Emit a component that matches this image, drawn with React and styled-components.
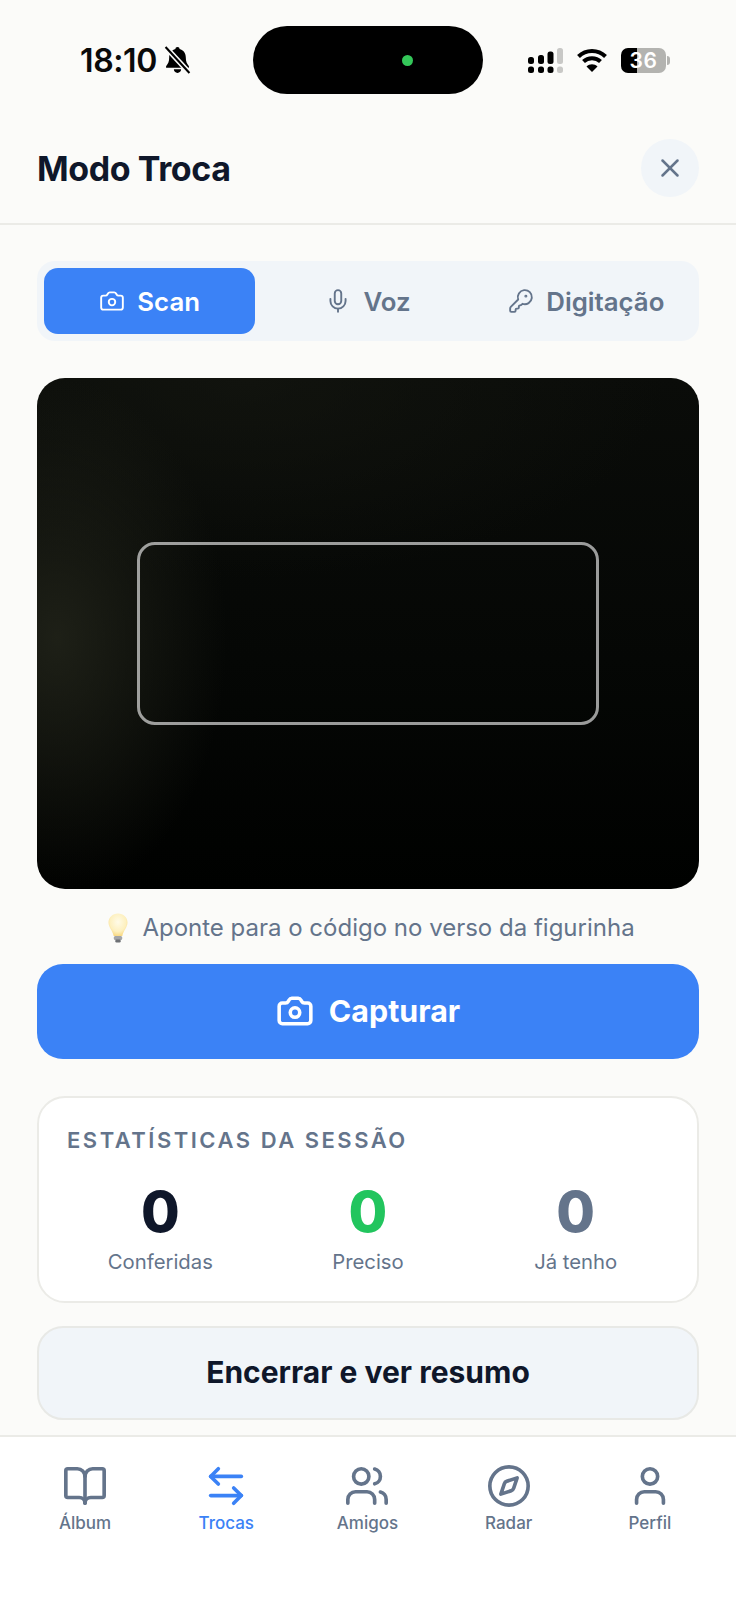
import React from 'react';
import styled, { createGlobalStyle } from 'styled-components';
import { ArrowLeftRight, BookOpen, Camera, Compass, KeyRound, Mic, User, Users, X } from 'lucide-react';

const GlobalStyle = createGlobalStyle`
  html, body {
    margin: 0;
    padding: 0;
    background: #fbfbf9;
  }
  * {
    box-sizing: border-box;
  }
  body {
    font-family: Inter, "Noto Sans", sans-serif;
  }
`;

const Page = styled.div`
  width: 736px;
  height: 1600px;
  display: flex;
  flex-direction: column;
  overflow: hidden;
  background: #fbfbf9;
`;

const StatusBar = styled.div`
  height: 120px;
  padding-top: 26px;
  display: grid;
  grid-template-columns: 253px 230px 1fr;
  align-items: start;
`;

const StatusLeft = styled.div`
  height: 68px;
  padding-left: 80px;
  display: flex;
  align-items: center;
  gap: 7px;
`;

const Time = styled.span`
  font-size: 32px;
  font-weight: 600;
  letter-spacing: -0.4px;
  color: #0a0a0a;
`;

const Island = styled.div`
  height: 68px;
  border-radius: 34px;
  background: #000;
  display: flex;
  align-items: center;
  padding-left: 149px;
`;

const GreenDot = styled.span`
  width: 11px;
  height: 11px;
  border-radius: 50%;
  background: #34c759;
`;

const StatusRight = styled.div`
  height: 68px;
  padding-left: 45px;
  display: flex;
  align-items: center;
  gap: 14px;
`;

const Battery = styled.div`
  position: relative;
  width: 45px;
  height: 25px;
  border-radius: 7px;
  background: linear-gradient(90deg, #000 36%, #b3b3b0 36%);
  color: #fff;
  font-size: 21px;
  font-weight: 600;
  line-height: 25px;
  text-align: center;
  letter-spacing: 0.5px;

  &::after {
    content: '';
    position: absolute;
    right: -4px;
    top: 8px;
    width: 3px;
    height: 9px;
    border-radius: 0 3px 3px 0;
    background: #b3b3b0;
  }
`;

const Header = styled.header`
  height: 105px;
  padding: 19px 37px 26px;
  display: flex;
  align-items: center;
  justify-content: space-between;
  border-bottom: 2px solid #ebebe7;
`;

const Title = styled.h1`
  margin: 0;
  font-size: 34px;
  font-weight: 700;
  letter-spacing: -0.4px;
  color: #0f172a;
`;

const CloseButton = styled.button`
  width: 58px;
  height: 58px;
  padding: 0;
  border: 0;
  border-radius: 50%;
  background: #f1f5f9;
  color: #64748b;
  display: flex;
  align-items: center;
  justify-content: center;
`;

const Content = styled.main`
  flex: 1;
  padding: 36px 37px 0;
  display: flex;
  flex-direction: column;
`;

const Tabs = styled.div`
  height: 80px;
  padding: 7px;
  border-radius: 18px;
  background: #f1f5f9;
  display: grid;
  grid-template-columns: repeat(3, 1fr);
  gap: 7px;
`;

const Tab = styled.button`
  border: 0;
  padding: 0;
  border-radius: 14px;
  background: ${p => (p.$active ? '#3b82f6' : 'transparent')};
  color: ${p => (p.$active ? '#ffffff' : '#64748b')};
  font-family: inherit;
  font-size: 25.8px;
  font-weight: 600;
  display: flex;
  align-items: center;
  justify-content: center;
  gap: 12px;
`;

const CameraView = styled.div`
  height: 511px;
  margin-top: 37px;
  border-radius: 28px;
  display: flex;
  align-items: center;
  justify-content: center;
  background:
    radial-gradient(ellipse 170px 260px at 20px 260px, rgba(34, 36, 26, 0.85), rgba(20, 22, 14, 0) 100%),
    radial-gradient(ellipse 420px 200px at 210px 0px, rgba(20, 22, 16, 0.7), rgba(14, 16, 10, 0) 100%),
    linear-gradient(180deg, #0a0c09 0%, #050705 55%, #000100 100%);
`;

const Reticle = styled.div`
  width: 462px;
  height: 183px;
  border: 3px solid rgba(255, 255, 255, 0.6);
  border-radius: 18px;
`;

const Hint = styled.p`
  margin: 0;
  height: 75px;
  padding: 2px 0 0 7px;
  display: flex;
  align-items: center;
  justify-content: center;
  gap: 14px;
  font-size: 24px;
  font-weight: 400;
  color: #64748b;
`;

const CaptureButton = styled.button`
  height: 95px;
  padding: 0 0 2px;
  border: 0;
  border-radius: 26px;
  background: #3b82f6;
  color: #fff;
  font-family: inherit;
  font-size: 30.4px;
  font-weight: 700;
  display: flex;
  align-items: center;
  justify-content: center;
  gap: 15px;
`;

const StatsCard = styled.section`
  height: 207px;
  margin-top: 37px;
  padding: 27px 28px 0;
  border: 2px solid #ebebe7;
  border-radius: 28px;
  background: #fff;
`;

const StatsTitle = styled.h2`
  margin: 0;
  font-size: 22px;
  line-height: 30px;
  font-weight: 600;
  letter-spacing: 2.5px;
  color: #64748b;
`;

const StatsGrid = styled.div`
  margin-top: 23px;
  display: grid;
  grid-template-columns: repeat(3, 1fr);
  gap: 21px;
`;

const Stat = styled.div`
  display: flex;
  flex-direction: column;
  align-items: center;
`;

const StatValue = styled.span`
  font-size: 56px;
  line-height: 68px;
  font-weight: 800;
  color: ${p => p.$color};
`;

const StatLabel = styled.span`
  font-size: 20.3px;
  line-height: 32px;
  color: #64748b;
`;

const EndButton = styled.button`
  height: 94px;
  margin-top: 23px;
  padding: 0 0 3px;
  border: 2px solid #e8e9e6;
  border-radius: 26px;
  background: #f1f5f9;
  color: #0f172a;
  font-family: inherit;
  font-size: 30px;
  font-weight: 700;
`;

const BottomNav = styled.nav`
  height: 165px;
  padding: 26px 15.5px 0 14.5px;
  border-top: 2px solid #ebebe7;
  background: #fff;
  display: grid;
  grid-template-columns: repeat(5, 1fr);
  align-items: start;
`;

const NavItem = styled.a`
  display: flex;
  flex-direction: column;
  align-items: center;
  gap: 1px;
  color: ${p => (p.$active ? '#3b82f6' : '#64748b')};
  font-size: 17px;
  line-height: 26px;
  font-weight: 500;
`;

const SignalIcon = () => (
  <svg width="35" height="25" viewBox="0 0 35 25" fill="#000">
    <rect x="0" y="9" width="6" height="7" rx="2.5" />
    <rect x="10" y="7" width="6" height="9" rx="2.5" />
    <rect x="19.500" y="3.500" width="6" height="12.500" rx="2.500" />
    <rect x="29" y="0" width="6" height="16" rx="2.500" fill="#c8c8c6" />
    <rect x="0" y="18.500" width="6" height="6.500" rx="2.500" />
    <rect x="10" y="18.500" width="6" height="6.500" rx="2.500" />
    <rect x="19.500" y="18.500" width="6" height="6.500" rx="2.500" />
    <rect x="29" y="18.500" width="6" height="6.500" rx="2.500" fill="#c8c8c6" />
  </svg>
);

const WifiIcon = () => (
  <svg width="30" height="24" viewBox="0 0 30 24" fill="none" stroke="#000" strokeWidth="4">
    <path d="M1.500 8.500C9 1 21 1 28.500 8.500" />
    <path d="M6.500 13.500C11 9 19 9 23.500 13.500" />
    <path d="M15 24l-5.500-5.500c3-3 8-3 11 0z" fill="#000" stroke="none" />
  </svg>
);

const BellSlashIcon = () => (
  <svg width="27" height="30" viewBox="0 0 26 28">
    <path
      d="M13 1.500c1.300 0 2 .9 2 2 3.800 1 6 4.200 6 8.200 0 4 1 6 3 8.300v1.500H2v-1.500c2-2.300 3-4.300 3-8.300 0-4 2.200-7.200 6-8.200 0-1.100.7-2 2-2zM9.500 23h7c0 2-1.500 3.500-3.500 3.500S9.500 25 9.500 23z"
      fill="#000"
    />
    <path d="M1.500 1.500l23 25" stroke="#fbfbf9" strokeWidth="5" />
    <path d="M1.500 1.500l23 25" stroke="#000" strokeWidth="2" />
  </svg>
);

const BulbIcon = () => (
  <svg width="20" height="30" viewBox="0 0 20 30">
    <defs>
      <radialGradient id="bulbGlow" cx="50%" cy="38%" r="65%">
        <stop offset="0%" stopColor="#fffbe8" />
        <stop offset="65%" stopColor="#fdf0bf" />
        <stop offset="100%" stopColor="#f8d67c" />
      </radialGradient>
    </defs>
    <path
      d="M10 .5C4.500.5.500 4.500.500 9.500c0 4.800 4 8 5.200 13.500h8.600c1.200-5.500 5.200-8.700 5.200-13.500 0-5-4-9-9.500-9z"
      fill="url(#bulbGlow)"
    />
    <rect x="5.800" y="23" width="8.400" height="4" rx="1.500" fill="#a3a5a8" />
    <rect x="7.300" y="26.500" width="5.400" height="3" rx="1.200" fill="#6d7075" />
  </svg>
);

const tabs = [
  { label: 'Scan', Icon: Camera, active: true },
  { label: 'Voz', Icon: Mic },
  { label: 'Digitação', Icon: KeyRound },
];

const stats = [
  { label: 'Conferidas', color: '#0f172a' },
  { label: 'Preciso', color: '#22c55e' },
  { label: 'Já tenho', color: '#64748b' },
];

const navItems = [
  { label: 'Álbum', Icon: BookOpen },
  { label: 'Trocas', Icon: ArrowLeftRight, active: true },
  { label: 'Amigos', Icon: Users },
  { label: 'Radar', Icon: Compass },
  { label: 'Perfil', Icon: User },
];

const App = () => {
  return (
    <Page>
      <GlobalStyle />
      <StatusBar>
        <StatusLeft>
          <Time>18:10</Time>
          <BellSlashIcon />
        </StatusLeft>
        <Island>
          <GreenDot />
        </Island>
        <StatusRight>
          <SignalIcon />
          <WifiIcon />
          <Battery>36</Battery>
        </StatusRight>
      </StatusBar>

      <Header>
        <Title>Modo Troca</Title>
        <CloseButton>
          <X size={30} strokeWidth={2} />
        </CloseButton>
      </Header>

      <Content>
        <Tabs>
          {tabs.map(({ label, Icon, active }) => (
            <Tab key={label} $active={active}>
              <Icon size={26} strokeWidth={1.75} />
              {label}
            </Tab>
          ))}
        </Tabs>

        <CameraView>
          <Reticle />
        </CameraView>

        <Hint>
          <BulbIcon />
          Aponte para o código no verso da figurinha
        </Hint>

        <CaptureButton>
          <Camera size={38} strokeWidth={2.25} />
          Capturar
        </CaptureButton>

        <StatsCard>
          <StatsTitle>ESTATÍSTICAS DA SESSÃO</StatsTitle>
          <StatsGrid>
            {stats.map(stat => (
              <Stat key={stat.label}>
                <StatValue $color={stat.color}>0</StatValue>
                <StatLabel>{stat.label}</StatLabel>
              </Stat>
            ))}
          </StatsGrid>
        </StatsCard>

        <EndButton>Encerrar e ver resumo</EndButton>
      </Content>

      <BottomNav>
        {navItems.map(({ label, Icon, active }) => (
          <NavItem key={label} $active={active}>
            <Icon size={46} strokeWidth={1.9} />
            {label}
          </NavItem>
        ))}
      </BottomNav>
    </Page>
  );
};

export default App;
